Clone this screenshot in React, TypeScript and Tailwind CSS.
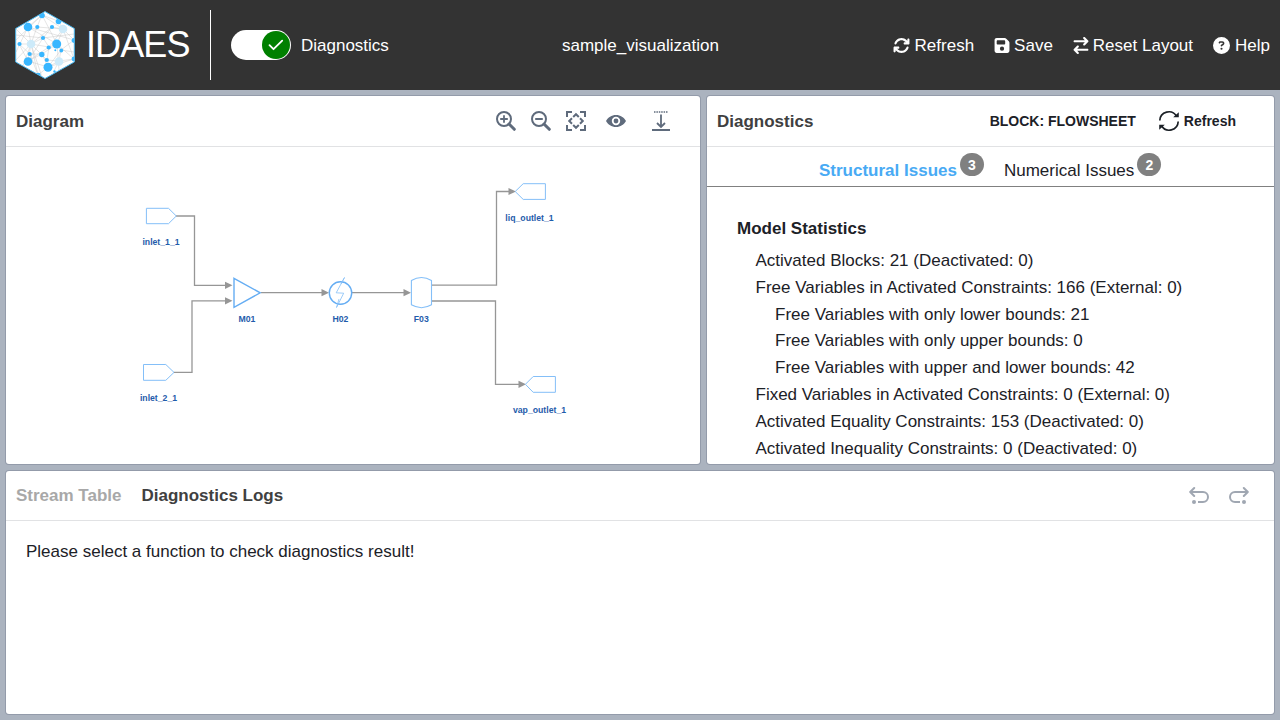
import React from "react";
import { FaArrowsRotate, FaFloppyDisk, FaArrowRightArrowLeft, FaCircleQuestion } from "react-icons/fa6";

const dots: [number, number, number, string][] = [
  [42, 15.5, 2.8, "#38b6ff"], [28, 27, 4.3, "#38b6ff"], [37.3, 27, 2.1, "#38b6ff"], [52, 27, 2.1, "#38b6ff"],
  [58.5, 21.5, 2.8, "#38b6ff"], [63, 29, 4.3, "#cdeaf9"], [43, 38, 2.1, "#38b6ff"], [19.5, 44, 2.1, "#38b6ff"],
  [31, 44, 4.3, "#cdeaf9"], [56.7, 44, 4.5, "#38b6ff"], [48.7, 47.5, 2.1, "#38b6ff"], [55.3, 50.3, 1, "#38b6ff"],
  [61.3, 50.5, 1.9, "#38b6ff"], [29.7, 54, 2.1, "#38b6ff"], [41.8, 54.5, 2.7, "#38b6ff"], [46.8, 60, 2.1, "#38b6ff"],
  [28, 61.5, 4.3, "#38b6ff"], [59, 61.5, 4.3, "#cdeaf9"], [48, 67.3, 4.5, "#38b6ff"], [74, 40.5, 2.4, "#38b6ff"],
  [74, 59, 2.4, "#38b6ff"], [54.5, 71.5, 1.2, "#38b6ff"], [38.5, 75, 2.2, "#38b6ff"],
];

const links =
  "M42 15L28 27L31 44L19 44L28 61M42 15L37 27L31 44L43 38L52 27L63 29L57 44L49 47L43 38M42 15L58 21L63 29L74 40L61 50L57 44M16 29L31 44L16 60M31 44L28 61L42 54L48 67L59 61L74 59L57 44M28 27L57 44L42 54L30 54M37 27L63 29L74 59M43 38L28 61L48 67L74 59M31 44L49 47L47 60L59 61L61 50M42 15L63 29M42 15L57 44M28 27L16 52M52 27L31 44L47 60M31 44L38 75L48 67M48 67L61 50L74 52M28 27L74 40M16 40L42 15M59 61L54 71M63 29L49 47L28 61M16 35L43 38L74 34M31 44L42 77M31 44L23 66M57 44L59 70M19 44L30 54L38 75";

function Logo() {
  return (
    <svg className="h-[72px] w-16 shrink-0" viewBox="13 9 64 72">
      <defs>
        <clipPath id="hex"><path d="M45 11.5L74.3 28.5V62L45 78.5L15.7 62V28.5Z" /></clipPath>
      </defs>
      <path d="M45 11.5L74.3 28.5V62L45 78.5L15.7 62V28.5Z" fill="#fff" />
      <g clipPath="url(#hex)">
        <path d={links} fill="none" stroke="#c4c4c4" strokeWidth=".45" />
        {dots.map(([x, y, r, c], i) => <circle key={i} cx={x} cy={y} r={r} fill={c} />)}
      </g>
      <path d="M45 11.5L74.3 28.5V62L45 78.5L15.7 62V28.5Z" fill="none" stroke="#4ab5ec" strokeWidth="1" />
    </svg>
  );
}

function Header() {
  return (
    <header className="flex h-[90px] shrink-0 items-center bg-[#333] pl-[13px] pr-[10px] text-[17px] leading-6 text-white">
      <Logo />
      <span className="ml-[9px] w-[124px] text-[36px] leading-[54px] tracking-[-0.9px]">IDAES</span>
      <div className="h-[70px] w-px bg-white" />
      <div className="ml-5 flex h-[30px] w-[60px] items-center justify-end rounded-full bg-white pr-[1px]">
        <div className="flex h-7 w-7 items-center justify-center rounded-full bg-[#008000]">
          <svg viewBox="0 0 16 12" className="h-3 w-4" fill="none" stroke="white" strokeWidth="1.8" strokeLinecap="round" strokeLinejoin="round"><path d="M1.5 6.2L5.5 10.2L14.2 1.6" /></svg>
        </div>
      </div>
      <span className="ml-[10px] w-[261px] pt-[2px]">Diagnostics</span>
      <span className="pt-[2px]">sample_visualization</span>
      <nav className="ml-auto flex items-center gap-5 pt-[2px]">
        <span className="flex items-center gap-[5px]"><FaArrowsRotate className="relative -top-px h-[17px] w-[17px]" />Refresh</span>
        <span className="flex items-center gap-1"><FaFloppyDisk className="relative -top-px h-[17px] w-4" />Save</span>
        <span className="flex items-center gap-1"><FaArrowRightArrowLeft className="relative -top-px h-[17px] w-4" />Reset Layout</span>
        <span className="flex items-center gap-[5px]"><FaCircleQuestion className="relative -top-px h-[17px] w-[17px]" />Help</span>
      </nav>
    </header>
  );
}

function Magnifier({ plus }: { plus?: boolean }) {
  return (
    <svg className="h-5 w-5" viewBox="0 0 20 20" fill="none" stroke="#5f6b7c">
      <circle cx="8" cy="8" r="7" strokeWidth="2" />
      <path d="M13 13L18.3 18.3" strokeWidth="3" strokeLinecap="round" />
      <path d={plus ? "M4.2 8H11.8M8 4.2V11.8" : "M4.2 8H11.8"} strokeWidth="1.8" />
    </svg>
  );
}

function DiagramTools() {
  return (
    <div className="flex items-center pr-[19.5px] text-[#5f6b7c]">
      <Magnifier plus />
      <div className="w-[15px]" />
      <Magnifier />
      <svg className="ml-[15px] h-5 w-5" viewBox="0 0 20 20" fill="none" stroke="#5f6b7c" strokeWidth="2">
        <path d="M1 6V1H6M14 1H19V6M19 14V19H14M6 19H1V14" />
        <path d="M7.2 6L10 3.2L12.8 6M14 7.2L16.8 10L14 12.8M12.8 14L10 16.8L7.2 14M6 12.8L3.2 10L6 7.2" />
      </svg>
      <svg className="ml-5 h-5 w-5" viewBox="0 0 20 20">
        <path fill="#5f6b7c" fillRule="evenodd" d="M0 10C2 6.5 5.5 4 10 4S18 6.5 20 10C18 13.5 14.5 16 10 16S2 13.5 0 10ZM10 5.8A4.2 4.2 0 1 0 10 14.2A4.2 4.2 0 1 0 10 5.8ZM10 7.6A2.4 2.4 0 1 1 10 12.4A2.4 2.4 0 1 1 10 7.6Z" />
      </svg>
      <svg className="ml-[25px] h-5 w-5" viewBox="0 0 20 20" fill="none" stroke="#5f6b7c">
        <path d="M3 1H17" strokeWidth="1.5" strokeDasharray="1.5 .9" />
        <path d="M10 3.5V15M6 12L10 16L14 12" strokeWidth="1.8" />
        <path d="M1 19H19" strokeWidth="1.8" />
      </svg>
    </div>
  );
}

function Arrow({ x, y }: { x: number; y: number }) {
  return <path d={`M${x} ${y}L${x - 7.5} ${y - 3.6}V${y + 3.6}Z`} fill="#969696" />;
}

function Diagram() {
  const labels: [number, number, string][] = [
    [161, 245, "inlet_1_1"], [158.5, 401, "inlet_2_1"], [247, 322, "M01"], [340.4, 322, "H02"],
    [421.3, 322, "F03"], [529.5, 221, "liq_outlet_1"], [539.5, 413, "vap_outlet_1"],
  ];
  return (
    <svg className="block h-[317px] w-full" viewBox="6 147 694 317">
      <g fill="none" stroke="#969696" strokeWidth="1.3">
        <path d="M176 216H194.5V285.3H226" />
        <path d="M174 372.4H192V300.8H226" />
        <path d="M261 292.7H323" />
        <path d="M352 292.7H405" />
        <path d="M432 285.2H496.5V191.5H510" />
        <path d="M432 301H495.5V384.3H520" />
      </g>
      <Arrow x={232.5} y={285.3} /><Arrow x={232.5} y={300.8} /><Arrow x={329} y={292.7} />
      <Arrow x={411} y={292.7} /><Arrow x={516} y={191.5} /><Arrow x={526} y={384.3} />
      <g fill="#fff" stroke="#84bff8" strokeWidth="1">
        <path d="M146.4 208.3H168.5L176.3 216L168.5 223.7H146.4Z" />
        <path d="M143.5 364.5H165.8L174 372.4L165.8 380.3H143.5Z" />
        <path d="M545.4 183.7H523.2L515.2 191.5L523.2 199.4H545.4Z" />
        <path d="M555.4 376.5H533.2L525.4 384.3L533.2 392.3H555.4Z" />
        <path d="M234 278.3L260.2 292.8L234 307.3Z" stroke="#65adf3" strokeWidth="1.4" />
        <circle cx="340.5" cy="293" r="11.2" stroke="#65adf3" strokeWidth="1.4" />
        <path d="M344.5 277.5L336.2 292.8L343.7 293.2L336.5 307.5M344.5 277.5L341 284M336.5 307.5L339 299" fill="none" strokeWidth=".8" />
        <path d="M411.4 280.5Q421.5 274.6 431.5 280.5V304.8Q421.5 310.6 411.4 304.8Z" strokeWidth="1.1" />
      </g>
      {labels.map(([x, y, t]) => (
        <text key={t} x={x} y={y} textAnchor="middle" fill="#1f5cab" className="text-[8.7px] font-bold">{t}</text>
      ))}
    </svg>
  );
}

function Badge({ children }: { children: React.ReactNode }) {
  return <span className="ml-[3px] flex h-[23px] w-6 items-center justify-center rounded-full bg-[#808080] text-[14px] font-bold leading-none text-white">{children}</span>;
}

const panel = "overflow-hidden rounded-[3px] bg-white shadow-[0_0_0_1px_#939baa]";
const bar = "flex items-center border-b border-[#e1e2e4] px-[10px] text-[#404040]";

function Diagnostics() {
  const stats: [number, string][] = [
    [0, "Activated Blocks: 21 (Deactivated: 0)"],
    [0, "Free Variables in Activated Constraints: 166 (External: 0)"],
    [1, "Free Variables with only lower bounds: 21"],
    [1, "Free Variables with only upper bounds: 0"],
    [1, "Free Variables with upper and lower bounds: 42"],
    [0, "Fixed Variables in Activated Constraints: 0 (External: 0)"],
    [0, "Activated Equality Constraints: 153 (Deactivated: 0)"],
    [0, "Activated Inequality Constraints: 0 (Deactivated: 0)"],
  ];
  return (
    <section className={`${panel} w-[567px]`}>
      <div className={`${bar} h-[51px]`}>
        <h2 className="pt-px text-[17px] font-bold">Diagnostics</h2>
        <div className="ml-auto flex items-center pr-[28px] text-[14px] font-bold text-[#1c2127]">
          <span>BLOCK: FLOWSHEET</span>
          <svg className="ml-[22px] mr-1 h-[22px] w-[22px]" viewBox="0 0 22 22" fill="none" stroke="#1c2127" strokeWidth="1.7">
            <path d="M1.8 10.5A9 9 0 0 1 18.5 6.2M20.2 11.5A9 9 0 0 1 3.5 15.8" />
            <path d="M20.8 2.2V7.3H15.2ZM1.2 19.8V14.7H6.8Z" fill="#1c2127" stroke="none" />
          </svg>
          <span>Refresh</span>
        </div>
      </div>
      <div className="flex h-10 items-start border-b border-[#808080] pl-[112px] pt-[6px] text-[17px] leading-6 text-[#1c2127]">
        <span className="pt-[6px] font-bold text-[#48aaf4]">Structural Issues</span><Badge>3</Badge>
        <span className="ml-5 pt-[6px]">Numerical Issues</span><Badge>2</Badge>
      </div>
      <div className="pl-[30px] pt-[28px] text-[17px] text-[#1c2127]">
        <h3 className="mb-[5.7px] font-bold leading-[27px]">Model Statistics</h3>
        <ul>
          {stats.map(([level, text]) => (
            <li key={text} className={level ? "pl-[38px] leading-[26.9px]" : "pl-[18.5px] leading-[26.9px]"}>{text}</li>
          ))}
        </ul>
      </div>
    </section>
  );
}

function Undo({ flip }: { flip?: boolean }) {
  return (
    <svg className={flip ? "h-5 w-5 -scale-x-100" : "h-5 w-5"} viewBox="0 0 20 20" fill="none" stroke="#a0a7b2" strokeWidth="2">
      <path d="M9 17H14A5 5 0 0 0 14 7H2" />
      <path d="M5.2 3L1.2 7L5.2 11" strokeLinecap="round" strokeLinejoin="round" />
      <circle cx="5" cy="17" r="2" fill="#a0a7b2" stroke="none" />
    </svg>
  );
}

export default function App() {
  return (
    <div className="flex h-[720px] w-[1280px] flex-col overflow-hidden bg-[#abb3bf] font-['Liberation_Sans',Arial,sans-serif]">
      <Header />
      <main className="flex flex-1 flex-col gap-[7px] px-[6px] pb-[6px] pt-[6px]">
        <div className="flex h-[368px] gap-[7px]">
          <section className={`${panel} w-[694px]`}>
            <div className={`${bar} h-[51px] justify-between`}>
              <h2 className="pt-px text-[17px] font-bold">Diagram</h2>
              <DiagramTools />
            </div>
            <Diagram />
          </section>
          <Diagnostics />
        </div>
        <section className={`${panel} flex-1`}>
          <div className={`${bar} h-[50px] text-[17px] font-bold`}>
            <span className="text-[#a8a8a8]">Stream Table</span>
            <span className="ml-5">Diagnostics Logs</span>
            <div className="ml-auto flex gap-5 pb-[2px] pr-[15px]"><Undo /><Undo flip /></div>
          </div>
          <p className="px-5 pt-[19px] text-[17px] leading-6 text-[#1c2127]">Please select a function to check diagnostics result!</p>
        </section>
      </main>
    </div>
  );
}
